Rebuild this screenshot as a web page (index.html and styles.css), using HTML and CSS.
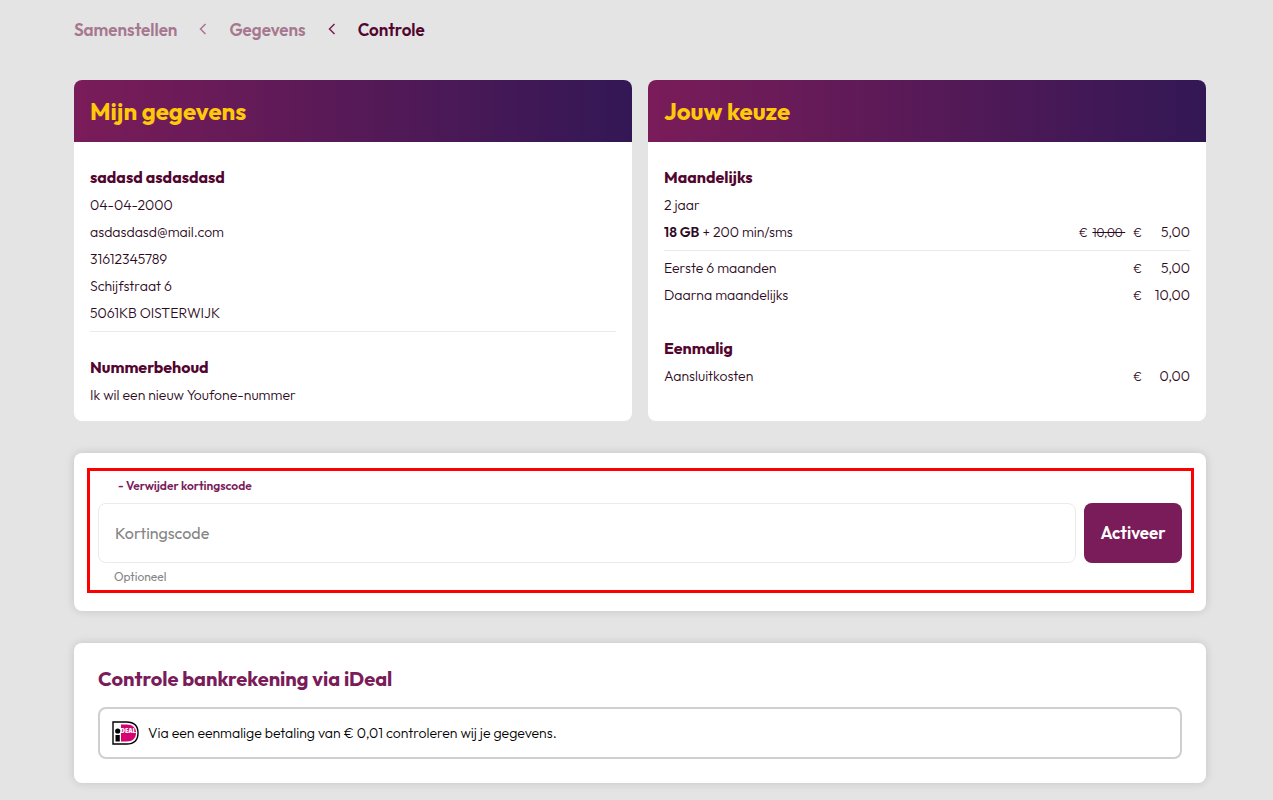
FILE: index.html
```html
<!DOCTYPE html>
<html lang="nl">
<head>
<meta charset="utf-8">
<meta name="viewport" content="width=device-width, initial-scale=1">
<title>Controle</title>
<link rel="stylesheet" href="styles.css">
</head>
<body>
<main class="page">
  <nav class="steps" aria-label="Stappen">
    <a class="step" href="#samenstellen">Samenstellen</a>
    <svg class="chevron chevron-past" viewBox="0 0 8 12" aria-hidden="true"><path d="M6.500 1 1.500 6l5 5"/></svg>
    <a class="step" href="#gegevens">Gegevens</a>
    <svg class="chevron" viewBox="0 0 8 12" aria-hidden="true"><path d="M6.500 1 1.500 6l5 5"/></svg>
    <a class="step step-current" href="#controle" aria-current="step">Controle</a>
  </nav>

  <div class="summary">
    <section class="panel">
      <h2 class="panel-title">Mijn gegevens</h2>
      <div class="panel-body">
        <div class="group ruled">
          <h3 class="group-title">sadasd asdasdasd</h3>
          <p class="row">04-04-2000</p>
          <p class="row">asdasdasd@mail.com</p>
          <p class="row">31612345789</p>
          <p class="row">Schijfstraat 6</p>
          <p class="row">5061KB OISTERWIJK</p>
        </div>
        <div class="group">
          <h3 class="group-title">Nummerbehoud</h3>
          <p class="row">Ik wil een nieuw Youfone-nummer</p>
        </div>
      </div>
    </section>

    <section class="panel">
      <h2 class="panel-title">Jouw keuze</h2>
      <div class="panel-body">
        <div class="group">
          <h3 class="group-title">Maandelijks</h3>
          <div class="ruled">
            <p class="row">2 jaar</p>
            <p class="row"><span class="row-label"><strong>18 GB</strong> + 200 min/sms</span><span class="was">€ <s class="old-price">10,00&nbsp;</s></span><span class="euro">€</span><span class="amount">5,00</span></p>
          </div>
          <div class="after-rule">
            <p class="row"><span class="row-label">Eerste 6 maanden</span><span class="euro">€</span><span class="amount">5,00</span></p>
            <p class="row"><span class="row-label">Daarna maandelijks</span><span class="euro">€</span><span class="amount">10,00</span></p>
          </div>
        </div>
        <div class="group">
          <h3 class="group-title">Eenmalig</h3>
          <p class="row"><span class="row-label">Aansluitkosten</span><span class="euro">€</span><span class="amount">0,00</span></p>
        </div>
      </div>
    </section>
  </div>

  <section class="card discount">
    <form class="discount-form">
      <a class="remove-code" href="#kortingscode">- Verwijder kortingscode</a>
      <div class="code-line">
        <input class="code-input" id="kortingscode" type="text" placeholder="Kortingscode" aria-label="Kortingscode" aria-describedby="code-hint">
        <button class="activate" type="button">Activeer</button>
      </div>
      <p class="hint" id="code-hint">Optioneel</p>
    </form>
  </section>

  <section class="card bank">
    <h2 class="bank-title">Controle bankrekening via iDeal</h2>
    <div class="bank-box">
      <svg class="ideal" viewBox="0 0 27 24" role="img" aria-label="iDEAL">
        <path d="M1 1h13.500C22 1 26 5 26 12s-4 11-11.500 11H1z" fill="#fff" stroke="#000" stroke-width="1.400"/>
        <path d="M9 3.500h5.500c6 0 9.500 3 9.500 8.500s-3.500 8.500-9.500 8.500H9z" fill="#d50072"/>
        <circle cx="5.700" cy="10" r="2.600"/>
        <path d="M3.500 14h4.300v6.500H3.500z"/>
        <text class="ideal-word" x="8.500" y="12">DEAL</text>
      </svg>
      <p class="bank-text">Via een eenmalige betaling van € 0,01 controleren wij je gegevens.</p>
    </div>
  </section>
</main>
</body>
</html>
```

FILE: styles.css
```css
* {
  box-sizing: border-box;
}

body,
h2,
h3,
p {
  margin: 0;
}

body {
  background: #e4e4e4;
  color: #2d0a23;
  font-family: Outfit, Lato, sans-serif;
  font-size: 14px;
  font-weight: 300;
  line-height: 27px;
}

.page {
  padding: 15px 67px 17px 74px;
}

.steps {
  display: flex;
  align-items: center;
  gap: 22px;
  height: 28px;
  margin-bottom: 37px;
  font-size: 17px;
  font-weight: 600;
}

.step {
  color: #a6788f;
  text-decoration: none;
}

.step-current {
  color: #52062f;
}

.chevron {
  width: 8px;
  height: 12px;
  fill: none;
  stroke: #7a1c59;
  stroke-width: 1.5px;
}

.chevron-past {
  stroke: #a97493;
}

.summary {
  display: grid;
  grid-template-columns: 1fr 1fr;
  gap: 16px;
  margin-bottom: 32px;
}

.panel {
  overflow: hidden;
  background: #fff;
  border-radius: 8px;
}

.panel-title {
  padding: 16px;
  background: linear-gradient(90deg, #7a1c59, #331755);
  color: #ffc90b;
  font-size: 24px;
  font-weight: 700;
  line-height: 30px;
}

.panel-body {
  padding: 0 16px 8px;
}

.group {
  padding: 21px 0 4px;
}

.group-title {
  margin-bottom: 1px;
  color: #52062f;
  font-size: 16px;
  font-weight: 700;
  line-height: 28px;
}

.ruled {
  padding-bottom: 4px;
  border-bottom: 1px solid #e9e9e9;
}

.after-rule {
  padding-top: 4px;
}

.row {
  display: flex;
  align-items: baseline;
}

.row strong {
  font-weight: 600;
}

.row-label {
  flex: 1;
}

.was,
.euro {
  font-size: 12px;
  line-height: 20px;
}

.was {
  margin-right: 8px;
}

.old-price {
  margin-left: 2px;
}

.amount {
  width: 48px;
  text-align: right;
}

.card {
  background: #fff;
  border-radius: 8px;
  box-shadow: 0 0 10px rgba(0, 0, 0, 0.14);
}

.discount {
  margin-bottom: 32px;
  padding: 15px 12px 18px 13px;
}

.discount-form {
  padding: 5px 9px 3px 8px;
  border: 3px solid #f00;
}

.remove-code {
  display: block;
  width: max-content;
  margin: 0 20px 7px;
  color: #7a1c59;
  font-size: 12px;
  font-weight: 600;
  line-height: 20px;
  text-decoration: none;
}

.code-line {
  display: flex;
  gap: 8px;
}

.code-input {
  flex: 1;
  min-width: 0;
  height: 60px;
  padding: 0 16px;
  border: 1px solid #ebebeb;
  border-radius: 8px;
  background: #fff;
  color: #2d0a23;
  font: inherit;
  font-size: 16px;
  font-weight: 400;
}

.code-input::placeholder {
  color: #858585;
  opacity: 1;
}

.activate {
  min-width: 98px;
  padding: 0 16px 2px;
  border: 0;
  border-radius: 8px;
  background: #7a1c59;
  color: #fff;
  font: inherit;
  font-size: 17px;
  font-weight: 600;
}

.hint {
  margin: 4px 16px 0;
  color: #858585;
  font-size: 12px;
  font-weight: 400;
  line-height: 20px;
}

.bank {
  padding: 24px;
}

.bank-title {
  margin-bottom: 16px;
  color: #7a1c59;
  font-size: 20px;
  font-weight: 700;
  line-height: 24px;
}

.bank-box {
  display: flex;
  align-items: center;
  gap: 9px;
  min-height: 52px;
  padding: 0 12px;
  border: 2px solid #cfcfcf;
  border-radius: 8px;
}

.ideal {
  flex: none;
  width: 27px;
  height: 24px;
}

.ideal-word {
  fill: #fff;
  font-family: "Open Sans", sans-serif;
  font-size: 6px;
  font-weight: 800;
}

.bank-text {
  color: #000;
}
```
